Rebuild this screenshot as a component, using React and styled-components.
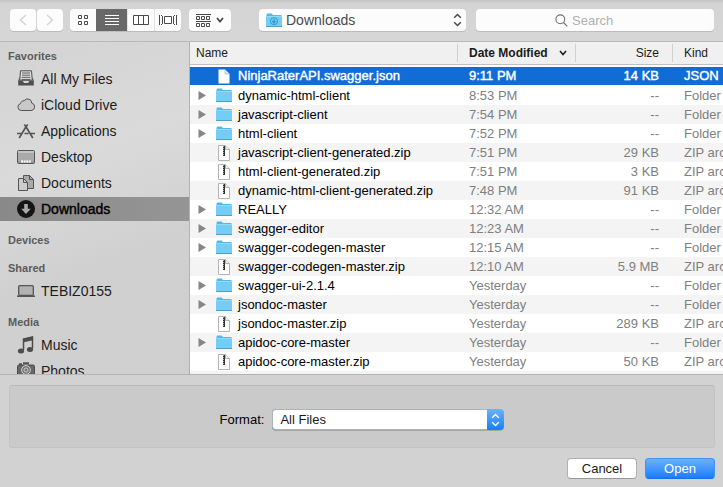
import React from "react";
import styled, { createGlobalStyle, css } from "styled-components";

const GlobalStyle = createGlobalStyle`
  *, *::before, *::after { box-sizing: border-box; }
  body { margin: 0; }
  body, button, input, select {
    font-family: "Helvetica Neue", "Liberation Sans", Arial, sans-serif;
    font-size: 13px;
  }
  button { cursor: default; }
  svg { display: block; flex: none; }
`;

const Dialog = styled.main`
  display: grid;
  grid-template-rows: auto minmax(0, 1fr) auto;
  height: 100vh;
  background: #d2d2d2;
  color: #1b1b1b;
`;

const Toolbar = styled.header`
  display: flex;
  align-items: center;
  height: 42px;
  padding: 1px 9px 2px 10px;
  border-bottom: 1px solid #b9b9b9;
  background: linear-gradient(#c4c4c4, #d4d4d4 4px, #d6d6d6);
`;

const raised = css`
  border: 0;
  border-radius: 4px;
  background: #fcfcfc;
  box-shadow: 0 1px 0 #bcbcbc;
`;

const History = styled.nav`
  display: flex;
  gap: 1px;
  margin-right: 7px;
`;

const ToolButton = styled.button`
  ${raised}
  display: flex;
  align-items: center;
  justify-content: center;
  gap: 5px;
  width: ${(p) => p.$width}px;
  height: 22px;
  padding: 0;
  color: ${(p) => (p.disabled ? "#d3d3d3" : "#4a4a4a")};
`;

const ViewGroup = styled.div`
  ${raised}
  display: flex;
  overflow: hidden;
  margin-right: 8px;
`;

const ViewButton = styled.button`
  display: flex;
  align-items: center;
  justify-content: center;
  width: ${(p) => (p.$wide ? 32 : 27)}px;
  height: 22px;
  padding: 0;
  border: 0;
  border-right: 1px solid #e2e2e2;
  background: ${(p) => (p["aria-pressed"] ? "#696969" : "transparent")};
  color: ${(p) => (p["aria-pressed"] ? "#fff" : "#4a4a4a")};
  &:first-child { width: 26px; border-right: 0; }
  &:last-child { width: 26px; border-right: 0; }
`;

const PathField = styled.label`
  ${raised}
  display: flex;
  align-items: center;
  flex: 1 1 207px;
  height: 22px;
  margin: 0 10px 0 28px;
  padding: 0 4px 0 7px;
  color: #4a4a4a;
`;

const PathSelect = styled.select`
  flex: 1;
  min-width: 0;
  padding: 0 0 0 4px;
  border: 0;
  appearance: none;
  background: transparent;
  color: #4a4a4a;
  font-size: 14px;
`;

const SearchField = styled.label`
  ${raised}
  display: flex;
  align-items: center;
  justify-content: center;
  gap: 4px;
  flex: 1 1 238px;
  height: 22px;
  color: #6f6f6f;
`;

const SearchInput = styled.input`
  width: 63px;
  padding: 0;
  border: 0;
  outline: 0;
  background: transparent;
  font-size: 13px;
  &::placeholder { color: #b0b0b0; opacity: 1; }
`;

const Browser = styled.div`
  display: grid;
  grid-template-columns: 190px minmax(0, 1fr);
  min-height: 0;
`;

const Sidebar = styled.aside`
  display: flex;
  flex-direction: column;
  gap: 10px;
  overflow: hidden;
  padding-top: 5px;
  border-right: 1px solid #b2b2b2;
  background: linear-gradient(160deg, #d3d3d3, #dadada 35%, #d1d0d0 65%, #cfcfcf);
`;

const Group = styled.section`
  display: flex;
  flex-direction: column;
  gap: 2px;
`;

const GroupTitle = styled.h2`
  margin: 0;
  padding-left: 8px;
  font-size: 11px;
  line-height: 18px;
  color: #5c5c5c;
`;

const Place = styled.button`
  display: flex;
  align-items: center;
  gap: 6px;
  height: 24px;
  flex: none;
  padding: 0 0 0 17px;
  border: 0;
  background: ${(p) => (p.$selected ? "linear-gradient(90deg, #898989, #969595)" : "transparent")};
  color: ${(p) => (p.$selected ? "#000" : "#1c1c1c")};
  font-size: 14px;
  -webkit-text-stroke: ${(p) => (p.$selected ? "0.4px #000" : "0")};
`;

const Listing = styled.div`
  overflow: hidden;
  background: #fff;
`;

const Table = styled.table`
  width: 100%;
  table-layout: fixed;
  border-collapse: separate;
  border-spacing: 0;
  tbody::before { content: ""; display: block; height: 2px; }
`;

const Column = styled.col`
  width: ${(p) => p.$width};
`;

const Heading = styled.th`
  height: 23px;
  padding: 2px 0;
  border-bottom: 1px solid #c0c0c0;
  background: #f0f0f0;
  font-size: 12px;
  font-weight: ${(p) => (p.$sorted ? "bold" : "normal")};
`;

const HeadingContent = styled.div`
  display: flex;
  align-items: center;
  justify-content: ${(p) => p.$justify || "flex-start"};
  height: 18px;
  padding: ${(p) => p.$padding};
  border-right: ${(p) => (p.$last ? "0" : "1px solid #d0d0d0")};
`;

const Row = styled.tr`
  height: 19px;
  background: ${(p) => (p.$selected ? "#116cd6" : "#fff")};
  color: ${(p) => (p.$selected ? "#fff" : "#7f7f7f")};
  -webkit-text-stroke: ${(p) => (p.$selected ? "0.4px #fff" : "0")};
  ${(p) => !p.$selected && css`&:nth-child(odd) { background: #f4f4f4; }`}
  ${(p) => p.$selected && css`td { border-bottom: 1px solid #fff; }`}
`;

const Cell = styled.td`
  height: 19px;
  padding: ${(p) => p.$padding};
  overflow: hidden;
  white-space: nowrap;
  line-height: 18px;
  text-align: ${(p) => p.$align || "left"};
`;

const FileName = styled.div`
  display: grid;
  grid-template-columns: 16px 16px 1fr;
  align-items: center;
  column-gap: 6px;
  color: ${(p) => (p.$selected ? "#fff" : "#000")};
  svg { justify-self: center; }
`;

const Disclosure = styled.button`
  display: flex;
  justify-content: center;
  padding: 0;
  border: 0;
  background: transparent;
`;

const Footer = styled.footer`
  display: flex;
  flex-direction: column;
  gap: 10px;
  padding: 10px 8px 8px 9px;
  border-top: 1px solid #b4b4b4;
`;

const Options = styled.div`
  display: flex;
  align-items: center;
  justify-content: center;
  gap: 8px;
  height: 63px;
  padding-top: 6px;
  border: 1px solid #c3c3c3;
  border-top-color: #bababa;
  border-radius: 3px;
  background: #cacaca;
  color: #000;
`;

const SelectShell = styled.div`
  display: flex;
  width: 232px;
  height: 21px;
  overflow: hidden;
  border-radius: 4px;
  background: linear-gradient(#6bb2fb, #1a7dff);
  box-shadow: 0 1px 0 #a4a4a4;
`;

const FormatSelect = styled.select`
  flex: 1;
  min-width: 0;
  padding: 0 0 0 7px;
  border: 1px solid #b2b2b2;
  border-right: 0;
  border-radius: 4px 0 0 4px;
  appearance: none;
  background: #fff;
  color: #1b1b1b;
`;

const SelectCap = styled.label`
  display: flex;
  align-items: center;
  justify-content: center;
  width: 17px;
  color: #fff;
`;

const Actions = styled.div`
  display: flex;
  justify-content: flex-end;
  gap: 8px;
`;

const Action = styled.button`
  width: 70px;
  height: 21px;
  padding: 0;
  border: 1px solid ${(p) => (p.$primary ? "#3d93f5" : "#b0b0b0")};
  border-bottom-color: ${(p) => (p.$primary ? "#1670ee" : "#999")};
  border-radius: 4px;
  background: ${(p) => (p.$primary ? "linear-gradient(#6bb2fb, #1a7dff)" : "#fff")};
  color: ${(p) => (p.$primary ? "#fff" : "#1b1b1b")};
`;

const Chevron = ({ d, w = 8, h = 12, stroke = 1.8 }) => (
  <svg width={w} height={h} viewBox={`0 0 ${w} ${h}`} fill="none" stroke="currentColor" strokeWidth={stroke}>
    <path d={d} />
  </svg>
);

const UpDown = () => <Chevron w={9} h={14} stroke={1.5} d="M1.2 4.8 4.5 1.5 7.8 4.8M1.2 9.2 4.5 12.5 7.8 9.2" />;

const GridIcon = () => (
  <svg width="10" height="10" fill="none" stroke="currentColor">
    <path d="M.5.5h3v3h-3zM6.5.5h3v3h-3zM.5 6.5h3v3h-3zM6.5 6.5h3v3h-3z" />
  </svg>
);
const ListIcon = () => (
  <svg width="14" height="10" stroke="currentColor"><path d="M0 .5h14M0 3.5h14M0 6.5h14M0 9.5h14" /></svg>
);
const ColumnsIcon = () => (
  <svg width="16" height="10" fill="none" stroke="currentColor"><path d="M.5.5h15v9h-15zM5.5.5v9M10.5.5v9" /></svg>
);
const CoverIcon = () => (
  <svg width="18" height="10" fill="none" stroke="currentColor">
    <path d="M.5 0v10M3.5 1v8M2 .5h1M2 9.5h1M5.5 1.5h7v7h-7zM14.5 1v8M17.5 0v10M15 .5h1M15 9.5h1" />
  </svg>
);
const ArrangeIcon = () => (
  <svg width="15" height="13" fill="none" stroke="currentColor">
    <path d="M0 .5h15M0 7.5h15M.5 2.5h3v3h-3zM5.5 2.5h3v3h-3zM10.5 2.5h3v3h-3zM.5 9.5h3v3h-3zM5.5 9.5h3v3h-3zM10.5 9.5h3v3h-3z" />
  </svg>
);
const SearchIcon = () => (
  <svg width="13" height="13" fill="none" stroke="currentColor" strokeWidth="1.1">
    <circle cx="5.3" cy="5.3" r="4.4" /><path d="m8.5 8.5 3.8 3.8" />
  </svg>
);

const FolderIcon = ({ badge }) => (
  <svg width="16" height="15" viewBox="0 0 16 15">
    <path d="M.5 2Q.5.5 1.5.5h4.2l1.2 1.5h8.6v11.5H.5z" fill="#55b7e6" />
    <path d="M0 3.3h16v10.2H0z" fill="#74cdf5" />
    <path d="M.5 3.5h15" stroke="#8edcfb" />
    <path d="M0 13.5h16" stroke="#4ba3cc" />
    {badge && (
      <g fill="none" stroke="#329bd0">
        <circle cx="8" cy="8.2" r="3.6" /><path d="M8 6v3.6M6.3 8.2 8 10l1.7-1.8" strokeWidth="1.3" />
      </g>
    )}
  </svg>
);
const PageIcon = () => (
  <svg width="12" height="15" viewBox="0 0 12 15">
    <path d="M.5.5H7L11.5 5v9.5H.5z" fill="#fff" /><path d="M7 .5V5h4.5" fill="#dce7f4" stroke="#8db3df" strokeWidth=".7" />
  </svg>
);
const ZipIcon = () => (
  <svg width="12" height="16" viewBox="0 0 12 16">
    <path d="M.5.5H7.5L11.5 4.5v11H.5z" fill="#fff" stroke="#b4b4b4" />
    <path d="M7.5.5v4h4" fill="#eee" stroke="#b4b4b4" />
    <path d="M6 1v10" stroke="#333" strokeWidth="2" /><path d="M5.5 1v10" stroke="#aaa" strokeDasharray="1 1" />
  </svg>
);
const BadgeIcon = () => (
  <svg width="16" height="16" viewBox="0 0 16 16"><ellipse cx="8.5" cy="8" rx="3" ry="7.5" fill="#ecd873" /></svg>
);
const Triangle = () => <svg width="8" height="9"><path d="M.5 0 8 4.5.5 9z" fill="#868686" /></svg>;

const placeIcons = {
  files: (
    <>
      <path d="M3.5.8h11l.8 9.5H2.7z" fill="#d9d9d9" stroke="#505050" />
      <path d="M5 3h8M5 5.2h8M4.7 7.4h8.6M4.5 9.5h9" stroke="#646464" />
      <path d="m2.6 7-1.4 3.5v5h15.6v-5L15.4 7v4h-3.2L11 13H7l-1.2-2H2.6z" fill="#505050" />
    </>
  ),
  cloud: (
    <path d="M4.2 14.5a3.5 3.5 0 0 1-.6-6.9 3 3 0 0 1 3.5-2.8 4.2 4.2 0 0 1 7.7 2.4 3.7 3.7 0 0 1-.7 7.3z" fill="#c8c8c8" stroke="#555" />
  ),
  apps: (
    <g fill="none" stroke="#555" strokeWidth="1.7">
      <path d="M7.3 2.5 9 4.8 15.8 16M10.7 2.5 9 4.8 2.2 16M0 11.5h5.5M7.5 11.5h4M14 11.5h4" />
    </g>
  ),
  desktop: (
    <>
      <rect x=".5" y="2.5" width="17" height="13" rx="1" fill="#aaa" stroke="#555" />
      <path d="M1 4h16" stroke="#ddd" /><path d="M1 14h16" stroke="#858585" />
      <path d="M4 13.5h10" stroke="#fff" strokeWidth="2" strokeDasharray="2 .6" />
    </>
  ),
  documents: (
    <g stroke="#555">
      <path d="M6.5 1.5h6l4 4v9h-10z" fill="#aaa" /><path d="M12.5 1.5v4h4" fill="none" />
      <path d="M1.5 4.5h5l4 4v8h-9z" fill="#ccc" /><path d="M6.5 4.5v4h4" fill="none" />
    </g>
  ),
  downloads: (
    <><circle cx="9" cy="9" r="9" fill="#151515" /><path d="M7.2 4h3.6v4.8h3L9 14 4.2 8.8h3z" fill="#aaa" /></>
  ),
  laptop: (
    <><rect x="1.7" y="3.7" width="14.6" height="9.6" rx="1" fill="#b2b2b2" stroke="#555" strokeWidth="1.3" /><path d="M0 14.2h18" stroke="#555" strokeWidth="1.6" /></>
  ),
  music: (
    <>
      <path d="M6.5 14V3l9-2v11.5" fill="none" stroke="#4c4c4c" strokeWidth="1.5" /><path d="M6.5 4.5 15.5 2.5" stroke="#4c4c4c" strokeWidth="3.5" />
      <ellipse cx="4" cy="15" rx="3.1" ry="2.5" fill="#4c4c4c" /><ellipse cx="13" cy="13.5" rx="3.1" ry="2.5" fill="#4c4c4c" />
    </>
  ),
  camera: (
    <>
      <path d="M2 2.3h3M6 1.3h6" stroke="#555" strokeWidth="2" /><rect x=".5" y="3" width="17" height="12" rx="1.5" fill="#666" stroke="#4b4b4b" />
      <circle cx="9" cy="8" r="4.4" fill="#777" stroke="#d0d0d0" /><circle cx="9" cy="8" r="2" fill="none" stroke="#ccc" />
    </>
  ),
};

const PlaceIcon = ({ name }) => <svg width="18" height="18" viewBox="0 0 18 18">{placeIcons[name]}</svg>;

const groups = [
  ["Favorites", [["All My Files", "files"], ["iCloud Drive", "cloud"], ["Applications", "apps"], ["Desktop", "desktop"], ["Documents", "documents"], ["Downloads", "downloads"]]],
  ["Devices", []],
  ["Shared", [["TEBIZ0155", "laptop"]]],
  ["Media", [["Music", "music"], ["Photos", "camera"]]],
];

const files = [
  ["NinjaRaterAPI.swagger.json", "9:11 PM", "14 KB", "JSON"],
  ["dynamic-html-client", "8:53 PM", "--", "Folder"],
  ["javascript-client", "7:54 PM", "--", "Folder"],
  ["html-client", "7:52 PM", "--", "Folder"],
  ["javascript-client-generated.zip", "7:51 PM", "29 KB", "ZIP archive"],
  ["html-client-generated.zip", "7:51 PM", "3 KB", "ZIP archive"],
  ["dynamic-html-client-generated.zip", "7:48 PM", "91 KB", "ZIP archive"],
  ["REALLY", "12:32 AM", "--", "Folder"],
  ["swagger-editor", "12:23 AM", "--", "Folder"],
  ["swagger-codegen-master", "12:15 AM", "--", "Folder"],
  ["swagger-codegen-master.zip", "12:10 AM", "5.9 MB", "ZIP archive"],
  ["swagger-ui-2.1.4", "Yesterday", "--", "Folder"],
  ["jsondoc-master", "Yesterday", "--", "Folder"],
  ["jsondoc-master.zip", "Yesterday", "289 KB", "ZIP archive"],
  ["apidoc-core-master", "Yesterday", "--", "Folder"],
  ["apidoc-core-master.zip", "Yesterday", "50 KB", "ZIP archive"],
];

const FileKindIcon = ({ kind }) =>
  kind === "Folder" ? <FolderIcon /> : kind === "JSON" ? <PageIcon /> : <ZipIcon />;

function FileRow({ file: [name, date, size, kind], selected }) {
  return (
    <Row $selected={selected} aria-selected={selected}>
      <Cell $padding="0 0 0 4px">
        <FileName $selected={selected}>
          {kind === "Folder" ? <Disclosure aria-label={`Expand ${name}`}><Triangle /></Disclosure> : <span />}
          <FileKindIcon kind={kind} />
          <span>{name}</span>
        </FileName>
      </Cell>
      <Cell $padding="0 0 0 11px">{date}</Cell>
      <Cell $padding="0 14px 0 0" $align="right">{size}</Cell>
      <Cell $padding="0 0 0 11px">{kind}</Cell>
    </Row>
  );
}

export default function App() {
  return (
    <Dialog>
      <GlobalStyle />
      <Toolbar>
        <History aria-label="History">
          <ToolButton $width={26} disabled aria-label="Back"><Chevron d="M7 1 1.5 6 7 11" stroke={1.4} /></ToolButton>
          <ToolButton $width={26} disabled aria-label="Forward"><Chevron d="M1 1 6.5 6 1 11" stroke={1.4} /></ToolButton>
        </History>
        <ViewGroup role="group" aria-label="View">
          <ViewButton aria-label="Icons" aria-pressed={false}><GridIcon /></ViewButton>
          <ViewButton $wide aria-label="List" aria-pressed={true}><ListIcon /></ViewButton>
          <ViewButton aria-label="Columns" aria-pressed={false}><ColumnsIcon /></ViewButton>
          <ViewButton aria-label="Cover Flow" aria-pressed={false}><CoverIcon /></ViewButton>
        </ViewGroup>
        <ToolButton $width={42} aria-label="Arrange">
          <ArrangeIcon />
          <Chevron w={8} h={6} d="M1 1 4 4.5 7 1" />
        </ToolButton>
        <PathField>
          <FolderIcon badge />
          <PathSelect aria-label="Location"><option>Downloads</option></PathSelect>
          <UpDown />
        </PathField>
        <SearchField>
          <SearchIcon />
          <SearchInput type="search" placeholder="Search" aria-label="Search" />
        </SearchField>
      </Toolbar>

      <Browser>
        <Sidebar>
          {groups.map(([title, places]) => (
            <Group key={title}>
              <GroupTitle>{title}</GroupTitle>
              {places.map(([label, icon]) => (
                <Place key={label} $selected={label === "Downloads"}>
                  <PlaceIcon name={icon} />
                  {label}
                </Place>
              ))}
            </Group>
          ))}
        </Sidebar>
        <Listing>
          <Table>
            <colgroup>
              <Column $width="auto" /><Column $width="118px" /><Column $width="97px" /><Column $width="50px" />
            </colgroup>
            <thead>
              <tr>
                <Heading scope="col"><HeadingContent $padding="0 6px">Name</HeadingContent></Heading>
                <Heading scope="col" $sorted aria-sort="descending">
                  <HeadingContent $padding="0 8px 0 11px" $justify="space-between">
                    Date Modified <Chevron w={8} h={6} d="M1 1 4 4.5 7 1" stroke={1.5} />
                  </HeadingContent>
                </Heading>
                <Heading scope="col"><HeadingContent $padding="0 13px 0 0" $justify="flex-end">Size</HeadingContent></Heading>
                <Heading scope="col"><HeadingContent $padding="0 0 0 11px" $last>Kind</HeadingContent></Heading>
              </tr>
            </thead>
            <tbody>
              {files.map((file, i) => <FileRow key={file[0]} file={file} selected={i === 0} />)}
              <Row>
                <Cell colSpan={4} $padding="0 0 0 4px"><FileName><span /><BadgeIcon /></FileName></Cell>
              </Row>
            </tbody>
          </Table>
        </Listing>
      </Browser>

      <Footer>
        <Options>
          <label htmlFor="format">Format:</label>
          <SelectShell>
            <FormatSelect id="format"><option>All Files</option></FormatSelect>
            <SelectCap htmlFor="format" aria-hidden="true"><UpDown /></SelectCap>
          </SelectShell>
        </Options>
        <Actions>
          <Action>Cancel</Action>
          <Action $primary>Open</Action>
        </Actions>
      </Footer>
    </Dialog>
  );
}
